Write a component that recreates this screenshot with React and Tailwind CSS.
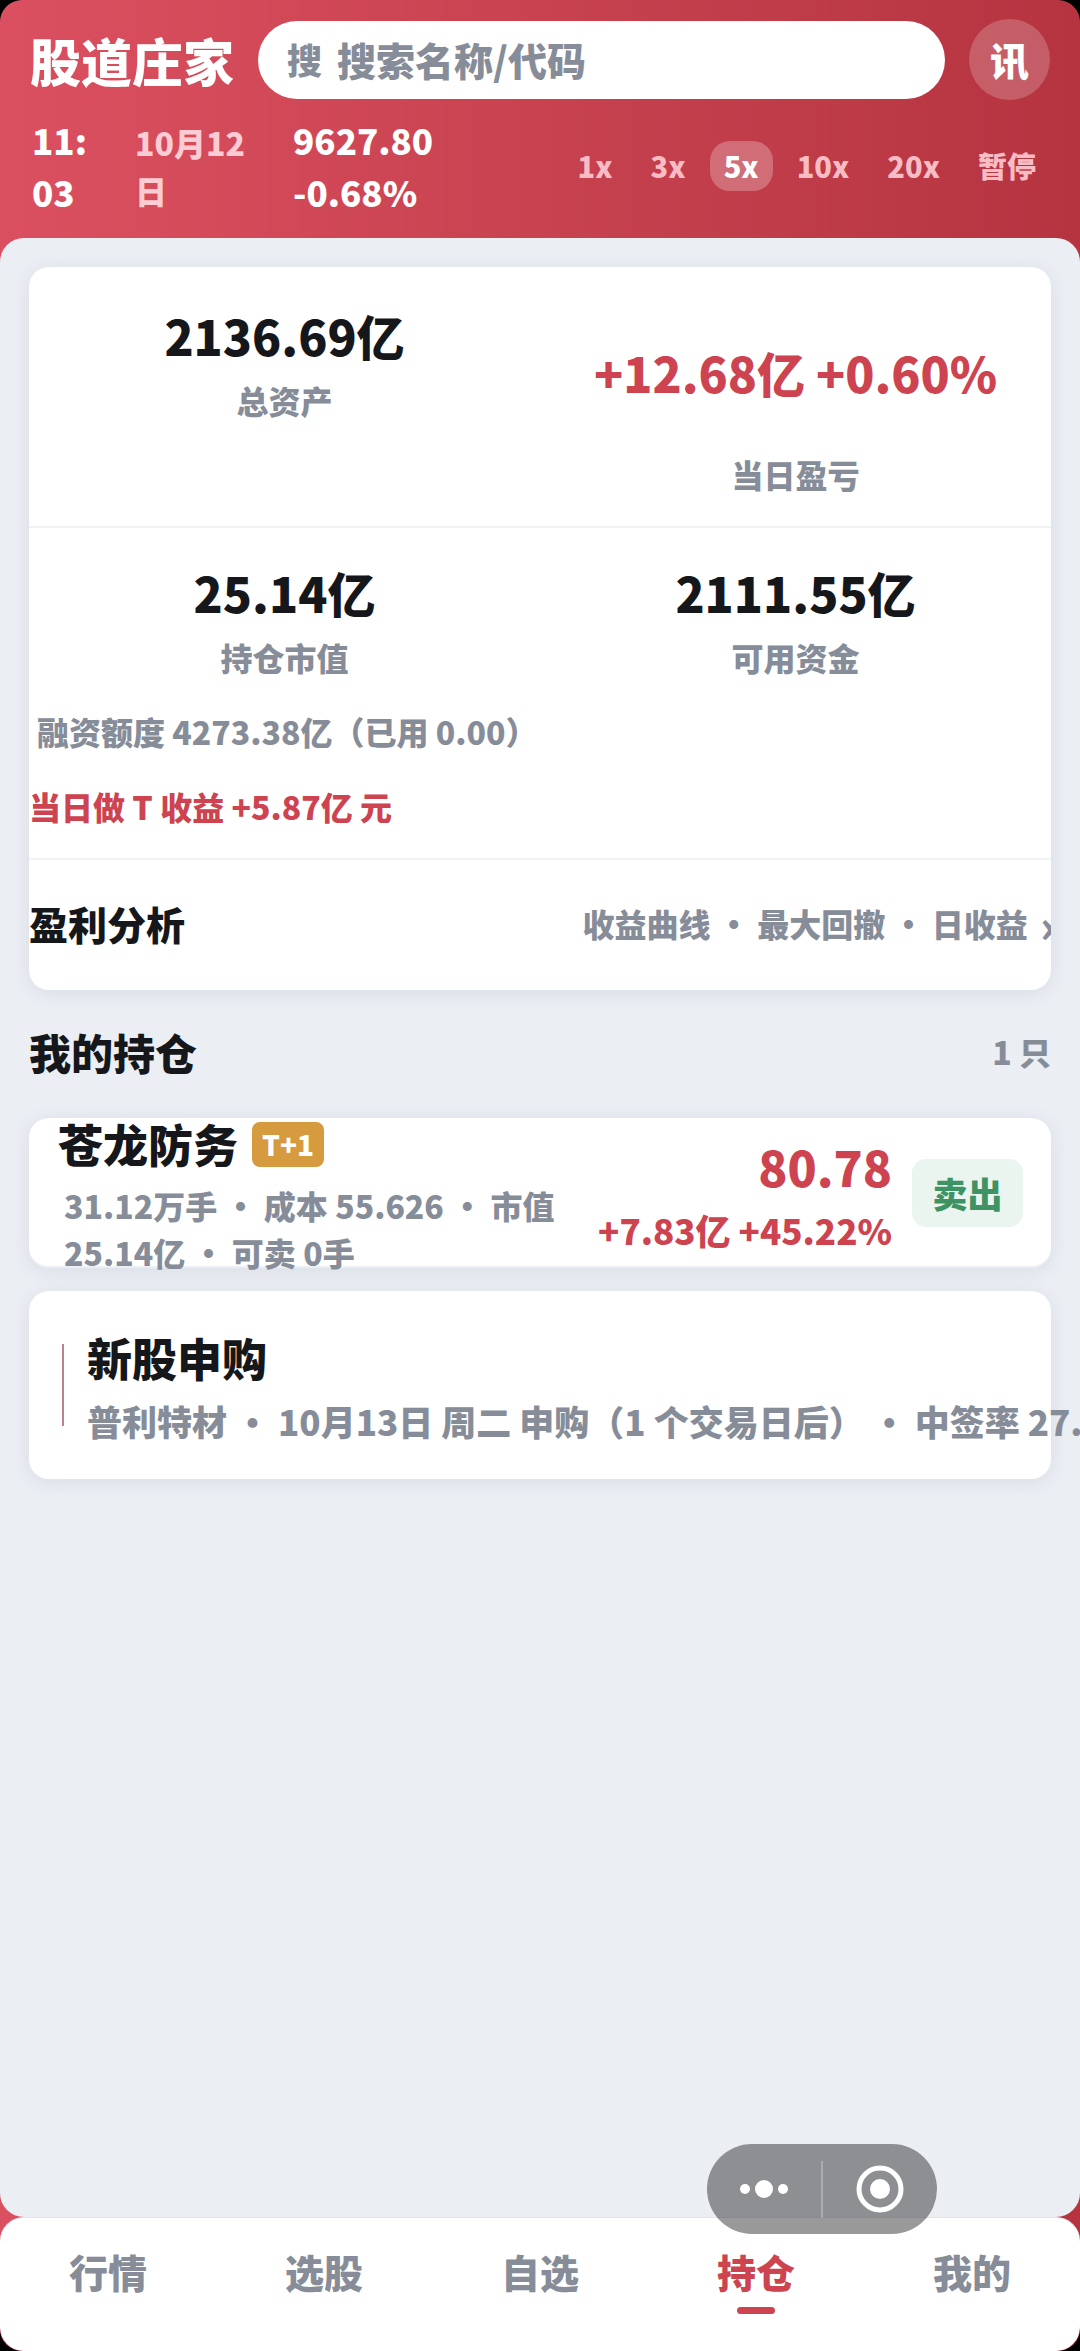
import React, { useState } from "react";

const speeds = ["1x", "3x", "5x", "10x", "20x", "暂停"];
const tabs = ["行情", "选股", "自选", "持仓", "我的"];

const card = "bg-white rounded-[20px] shadow-[0_3px_18px_rgba(90,100,150,0.12)]";

function Stat({ value, label, red, tall }) {
  return (
    <div className="flex flex-col items-center gap-1">
      <div
        className={`text-[48px] whitespace-nowrap ${red ? "text-[#cd4350]" : "text-[#16171b]"} ${tall ? "leading-[148px]" : "leading-[74px]"}`}
      >
        {value}
      </div>
      <div className="text-[32px] leading-[48px] text-[#868d99]">{label}</div>
    </div>
  );
}

function Header({ speed, setSpeed }) {
  return (
    <header className="px-[30px] pt-[19px] pb-5 text-white">
      {/* TITLE + SEARCH */}
      <div className="flex items-center">
        <h1 className="text-[51px] leading-[80px] shrink-0">股道庄家</h1>
        <label className="ml-6 flex-1 min-w-0 h-[78px] rounded-full bg-white px-[29px] flex items-center gap-[15px] text-[#868d99]">
          <span className="text-[35px]">搜</span>
          <input
            type="text"
            placeholder="搜索名称/代码"
            className="flex-1 min-w-0 text-[39px] text-[#16171b] placeholder:text-[#868d99] outline-none"
          />
        </label>
        <button
          type="button"
          className="ml-6 size-[81px] shrink-0 rounded-full bg-white/20 text-[39px]"
        >
          讯
        </button>
      </div>

      {/* CLOCK + INDEX + SPEED */}
      <div className="mt-[14px] flex items-center">
        <div className="w-[105px] pl-[2px] text-[35px] leading-[52px]">
          <div>11:</div>
          <div>03</div>
        </div>
        <div className="w-[120px] text-[32px] leading-[48px] text-[#fbccd3]">10月12日</div>
        <div className="ml-[38px] w-[150px] text-[35px] leading-[52px]">9627.80 -0.68%</div>
        <div className="ml-auto flex gap-[10px]">
          {speeds.map((s) => (
            <button
              key={s}
              type="button"
              onClick={() => setSpeed(s)}
              className={`h-[50px] px-[14px] rounded-[20px] text-[29px] ${speed === s ? "bg-white/25 text-white" : "text-[#f8bcc5]"}`}
            >
              {s}
            </button>
          ))}
        </div>
      </div>
    </header>
  );
}

function Assets() {
  return (
    <section className={`${card} overflow-hidden pt-1`}>
      <div className="grid grid-cols-2 pt-[27px] pb-7 border-b-2 border-[#f1f2f4]">
        <Stat value="2136.69亿" label="总资产" />
        <Stat value="+12.68亿 +0.60%" label="当日盈亏" red tall />
      </div>
      <div className="grid grid-cols-2 pt-[27px] pb-[26px]">
        <Stat value="25.14亿" label="持仓市值" />
        <Stat value="2111.55亿" label="可用资金" />
      </div>
      <p className="pl-2 text-[32px] leading-[48px] text-[#868d99]">
        融资额度 4273.38亿（已用 0.00）
      </p>
      <p className="mt-[27px] mb-7 text-[32px] leading-[48px] text-[#cd4350]">
        当日做 T 收益 +5.87亿 元
      </p>
      <button
        type="button"
        className="w-full h-[132px] pb-1 border-t-2 border-[#f1f2f4] flex items-center justify-between text-left"
      >
        <span className="text-[39px] text-[#16171b]">盈利分析</span>
        <span className="-mr-1 flex items-center gap-3 text-[32px] text-[#868d99] whitespace-nowrap">
          <span>收益曲线 ・ 最大回撤 ・ 日收益</span>
          <span className="pt-[2px] text-[45px]">›</span>
        </span>
      </button>
    </section>
  );
}

function Holding() {
  return (
    <section className={`${card} h-[150px] border-b-2 border-[#eceff5] pt-[2px] pl-[29px] pr-7 flex items-center`}>
      <div className="flex-1 min-w-0">
        <div className="flex items-center gap-[14px]">
          <h3 className="text-[45px] leading-[68px] text-[#16171b]">苍龙防务</h3>
          <span className="h-[45px] px-[10px] rounded-lg bg-[#d69a3f] text-[28px] leading-[45px] text-white">
            T+1
          </span>
        </div>
        <p className="mt-1 pl-[6px] text-[32px] leading-[47px] text-[#868d99]">
          31.12万手 ・ 成本 55.626 ・ 市值 25.14亿 ・ 可卖 0手
        </p>
      </div>
      <div className="ml-6 text-right text-[#cd4350] whitespace-nowrap">
        <div className="text-[48px] leading-[74px]">80.78</div>
        <div className="text-[35px] leading-[54px]">+7.83亿 +45.22%</div>
      </div>
      <button
        type="button"
        className="ml-5 w-[111px] h-[68px] shrink-0 rounded-[14px] bg-[#eaf5ef] text-[35px] text-[#3d9363]"
      >
        卖出
      </button>
    </section>
  );
}

function NewStock() {
  return (
    <section className={`${card} mt-[23px] h-[188px] pl-[33px] flex items-center gap-[23px]`}>
      <div className="w-[2px] h-[82px] shrink-0 bg-[#c08089]"></div>
      <div className="pt-1 whitespace-nowrap">
        <h3 className="text-[45px] leading-[68px] text-[#16171b]">新股申购</h3>
        <p className="text-[35px] leading-[58px] text-[#868d99]">
          普利特材 ・ 10月13日 周二 申购（1 个交易日后） ・ 中签率 27.
        </p>
      </div>
    </section>
  );
}

function Capsule() {
  return (
    <div className="fixed right-[143px] bottom-[117px] w-[230px] h-[90px] rounded-full bg-black/40 flex items-center">
      <button type="button" aria-label="更多" className="flex-1 h-full flex items-center justify-center">
        <svg width="60" height="20" viewBox="0 0 60 20" fill="#fff">
          <circle cx="11" cy="10" r="5" />
          <circle cx="30" cy="10" r="9" />
          <circle cx="49" cy="10" r="5" />
        </svg>
      </button>
      <div className="w-[2px] h-[57px] bg-white/25"></div>
      <button type="button" aria-label="关闭" className="flex-1 h-full flex items-center justify-center">
        <svg width="50" height="50" viewBox="0 0 50 50">
          <circle cx="25" cy="25" r="21" fill="none" stroke="#fff" strokeWidth="5" />
          <circle cx="25" cy="25" r="10" fill="#fff" />
        </svg>
      </button>
    </div>
  );
}

function App() {
  const [speed, setSpeed] = useState("5x");
  const [tab, setTab] = useState("持仓");

  return (
    <div className="bg-black font-['Noto_Sans_CJK_SC',sans-serif] font-black" lang="zh-CN">
      <div className="min-h-screen flex flex-col overflow-hidden rounded-[22px] bg-[linear-gradient(90deg,#db5060,#b53440)]">
        <Header speed={speed} setSpeed={setSpeed} />

        <main className="flex-1 px-[29px] pt-[29px] rounded-[24px] bg-[#ebeef3]">
          <Assets />
          <div className="h-[128px] pb-[6px] flex items-center justify-between">
            <h2 className="text-[42px] text-[#16171b]">我的持仓</h2>
            <span className="text-[32px] text-[#868d99]">1 只</span>
          </div>
          <Holding />
          <NewStock />
        </main>

        {/* TABS */}
        <nav className="h-[134px] rounded-[24px] bg-white border-t border-[#e4e6ea] grid grid-cols-5">
          {tabs.map((t) => (
            <button
              key={t}
              type="button"
              onClick={() => setTab(t)}
              className={`pt-6 flex flex-col items-center text-[39px] leading-[58px] ${tab === t ? "text-[#cd4350]" : "text-[#868d99]"}`}
            >
              {t}
              {tab === t && <span className="mt-[7px] w-[38px] h-[7px] rounded-full bg-[#cd4350]"></span>}
            </button>
          ))}
        </nav>
      </div>
      <Capsule />
    </div>
  );
}

export default App;
